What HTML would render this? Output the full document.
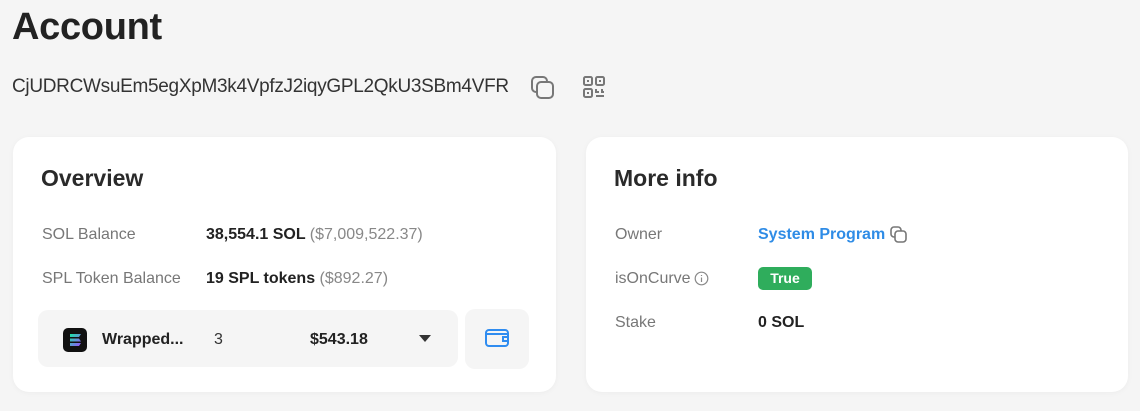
<!DOCTYPE html>
<html><head><meta charset="utf-8"><style>
*{box-sizing:border-box;margin:0;padding:0}
body{width:1140px;height:411px;background:#f5f5f5;font-family:"Liberation Sans",sans-serif;color:#222;position:relative;overflow:hidden}
.abs{position:absolute}
h1{position:absolute;left:12px;top:6px;font-size:38px;font-weight:bold;letter-spacing:-0.3px;color:#222}
.addr{left:12px;top:76px;font-size:19px;color:#333;letter-spacing:-0.3px}
.card{position:absolute;top:137px;height:255px;background:#fff;border-radius:16px;box-shadow:0 1px 6px rgba(0,0,0,0.04)}
.card h2{position:absolute;left:28px;top:28px;font-size:23px;font-weight:bold;color:#2a2a2a}
.lbl{font-size:16px;color:#777}
.val{font-size:16px;color:#222;font-weight:bold}
.gray{color:#888;font-weight:normal}
</style></head><body>
<h1>Account</h1>
<div class="abs addr">CjUDRCWsuEm5egXpM3k4VpfzJ2iqyGPL2QkU3SBm4VFR</div>
<svg class="abs" style="left:530px;top:75px" width="26" height="26" viewBox="0 0 26 26" fill="none" stroke="#777" stroke-width="2"><rect x="2" y="2" width="15" height="15" rx="4"/><rect x="7" y="7" width="16" height="16" rx="4" fill="#f5f5f5"/></svg>
<svg class="abs" style="left:582px;top:75px" width="26" height="26" viewBox="0 0 26 26" fill="none" stroke="#777" stroke-width="2"><rect x="2" y="2" width="8" height="8" rx="1.5"/><rect x="14" y="2" width="8" height="8" rx="1.5"/><rect x="2" y="14" width="8" height="8" rx="1.5"/><rect x="5" y="5" width="2" height="2" fill="#777" stroke="none"/><rect x="17" y="5" width="2" height="2" fill="#777" stroke="none"/><rect x="5" y="17" width="2" height="2" fill="#777" stroke="none"/><path d="M14 14v3h3M20 14v3h2M14 21h8"/></svg>

<div class="card" style="left:13px;width:543px">
<h2>Overview</h2>
<div class="abs lbl" style="left:29px;top:89px">SOL Balance</div>
<div class="abs val" style="left:193px;top:89px">38,554.1 SOL <span class="gray">($7,009,522.37)</span></div>
<div class="abs lbl" style="left:29px;top:133px">SPL Token Balance</div>
<div class="abs val" style="left:193px;top:133px">19 SPL tokens <span class="gray">($892.27)</span></div>
<div class="abs" style="left:25px;top:173px;width:420px;height:57px;background:#f5f5f5;border-radius:10px"></div>
<div class="abs" style="left:452px;top:172px;width:64px;height:60px;background:#f5f5f5;border-radius:10px"></div>
<div class="abs" style="left:50px;top:191px;width:24px;height:24px;background:#111;border-radius:5px"></div>
<svg class="abs" style="left:54px;top:195px" width="16" height="16" viewBox="0 0 16 16"><defs><linearGradient id="g" x1="0" y1="0" x2="1" y2="1"><stop offset="0" stop-color="#19e6a4"/><stop offset="1" stop-color="#9b4dff"/></linearGradient></defs><path d="M3 2h11l-2 3H3zM3 6.5h9l2 3H3zM3 11h11l-2 3H3z" fill="url(#g)"/></svg>
<div class="abs val" style="left:89px;top:194px">Wrapped...</div>
<div class="abs" style="left:201px;top:194px;font-size:16px;color:#333">3</div>
<div class="abs val" style="left:297px;top:194px">$543.18</div>
<div class="abs" style="left:406px;top:198px;width:0;height:0;border-left:6px solid transparent;border-right:6px solid transparent;border-top:7px solid #333"></div>
<svg class="abs" style="left:471px;top:190px" width="26" height="22" viewBox="0 0 26 22" fill="none" stroke="#2f8cf0" stroke-width="2"><rect x="2" y="3" width="22" height="16" rx="3"/><path d="M2 7h22M24 10h-5v4h5"/></svg>
</div>

<div class="card" style="left:586px;width:542px">
<h2>More info</h2>
<div class="abs lbl" style="left:29px;top:89px">Owner</div>
<div class="abs" style="left:172px;top:89px;font-size:16px;font-weight:bold;color:#2f8ce6">System Program</div>
<svg class="abs" style="left:304px;top:89px" width="17" height="17" viewBox="0 0 17 17" fill="none" stroke="#777" stroke-width="1.6"><rect x="1" y="1" width="10" height="10" rx="3"/><rect x="5" y="5" width="11" height="11" rx="3" fill="#fff"/></svg>
<div class="abs lbl" style="left:29px;top:133px">isOnCurve</div>
<svg class="abs" style="left:108px;top:134px" width="15" height="15" viewBox="0 0 15 15" fill="none" stroke="#888" stroke-width="1.2"><circle cx="7.5" cy="7.5" r="6.3"/><path d="M7.5 6.5v4.5M7.5 4v1"/></svg>
<div class="abs" style="left:172px;top:130px;width:54px;height:23px;background:#2fad5c;border-radius:5px;color:#fff;font-size:14px;font-weight:bold;text-align:center;line-height:23px">True</div>
<div class="abs lbl" style="left:29px;top:177px">Stake</div>
<div class="abs val" style="left:172px;top:177px">0 SOL</div>
</div>
</body></html>
